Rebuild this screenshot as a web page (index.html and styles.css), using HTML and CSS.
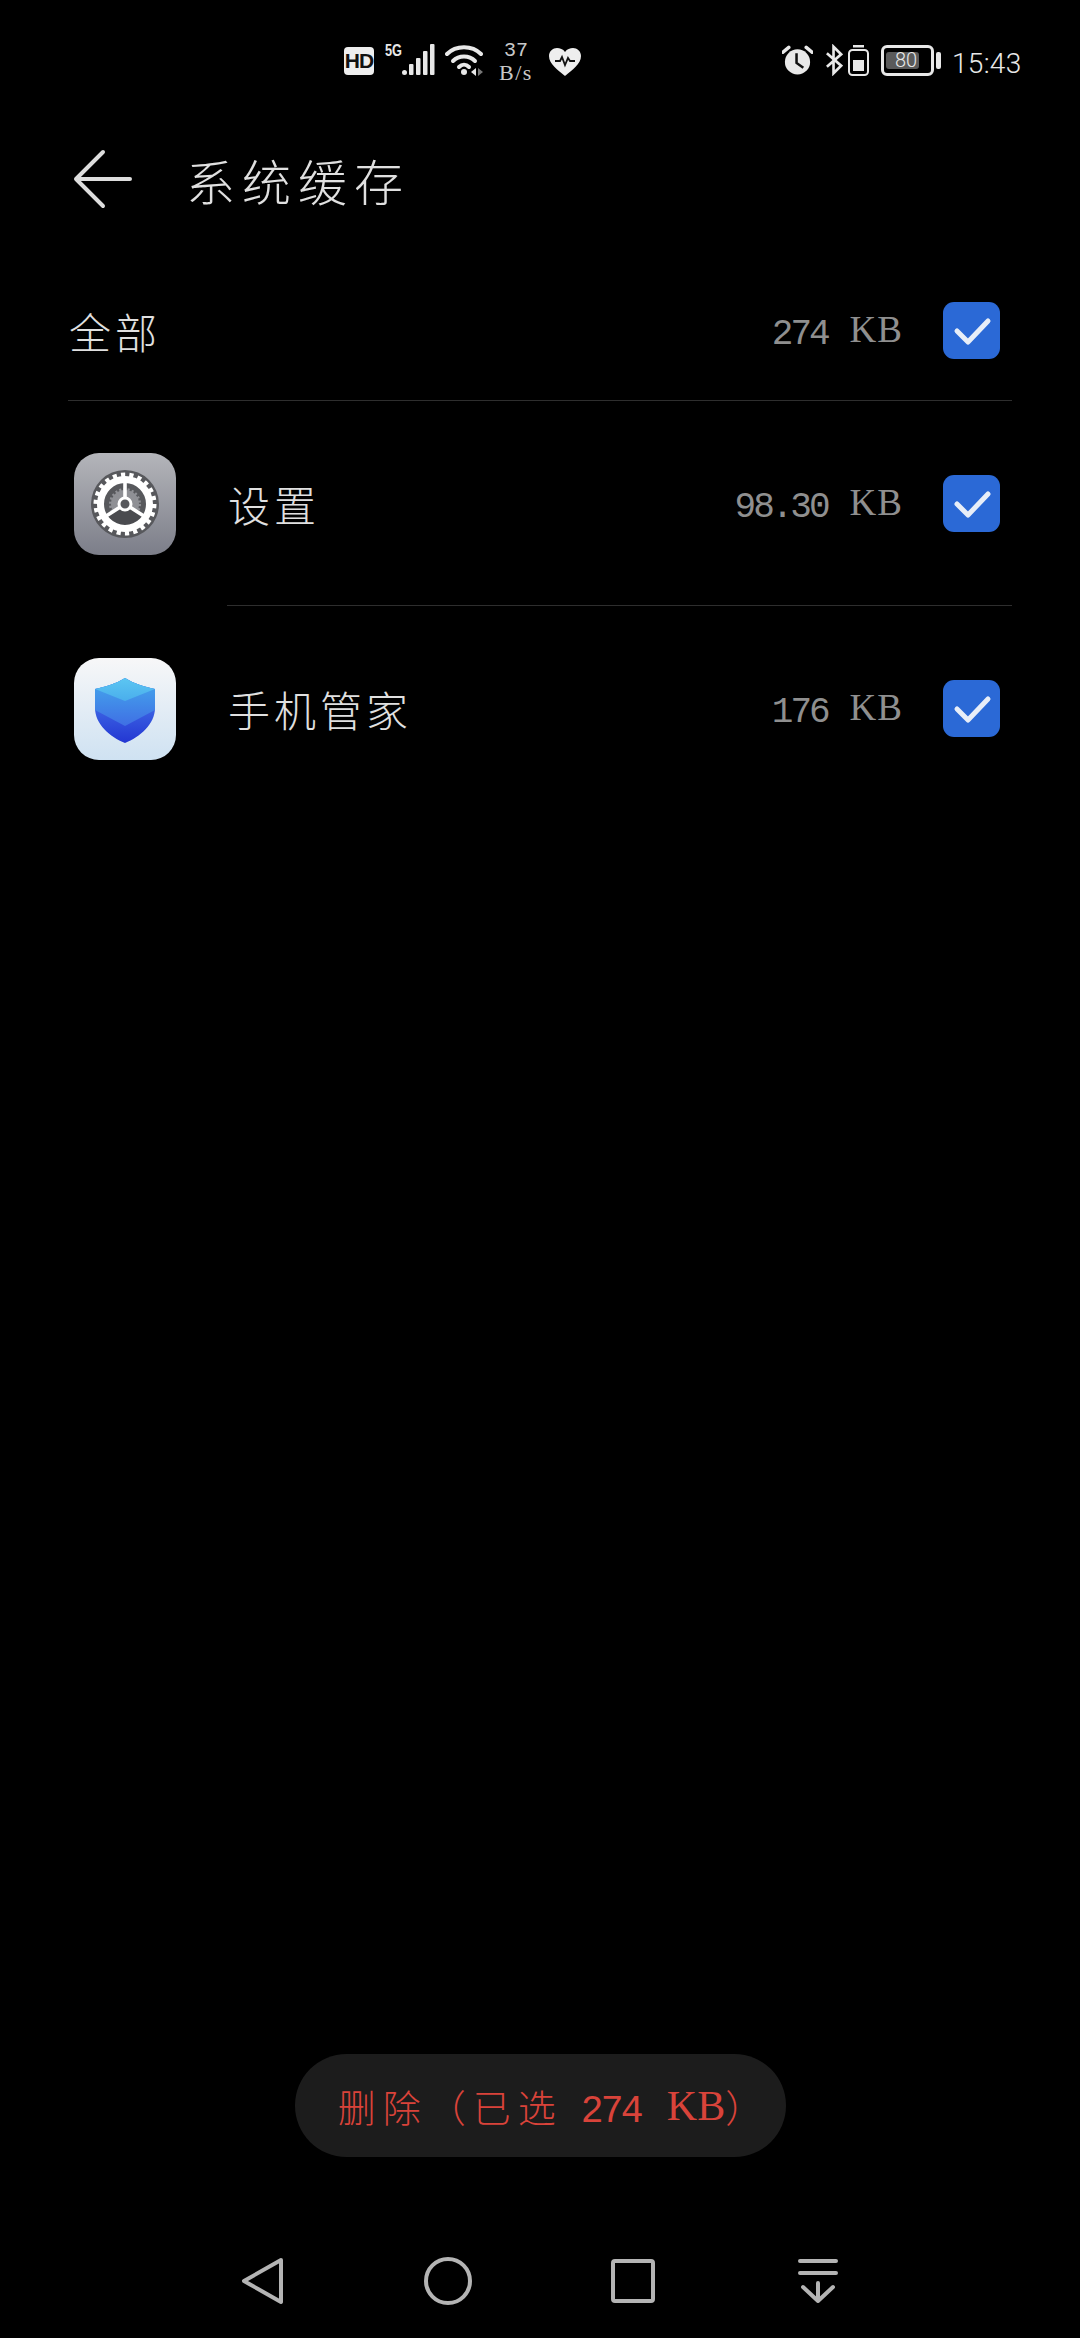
FILE: index.html
```html
<!DOCTYPE html>
<html lang="zh-CN">
<head>
    <meta charset="UTF-8">
    <title>系统缓存</title>
    <link rel="stylesheet" href="styles.css">
</head>
<body>
<div class="page">

    <!-- status bar -->
    <div class="status">
        <div class="hd">HD</div>
        <div class="five-g">5G</div>
        <svg class="signal" width="33" height="32" viewBox="17 0 33 32">
            <g fill="#e8e8e8">
                <rect x="17" y="26" width="5" height="5" rx="2.5"/>
                <rect x="24" y="20" width="4.5" height="11" rx="1"/>
                <rect x="31" y="14" width="4.5" height="17" rx="1"/>
                <rect x="38" y="7" width="4.5" height="24" rx="1"/>
                <rect x="45" y="0" width="4.5" height="31" rx="1"/>
            </g>
        </svg>
        <svg class="wifi" width="38" height="32" viewBox="0 0 38 32">
            <g fill="none" stroke="#e8e8e8" stroke-width="4" stroke-linecap="round">
                <path d="M2 10 C11 1 27 1 36 10"/>
                <path d="M8 17 C14 11 24 11 30 17"/>
                <path d="M14 23 C17 20 21 20 24 23"/>
            </g>
            <circle cx="19" cy="28" r="3" fill="#e8e8e8"/>
            <path d="M31 24 L26 28 L31 32 Z" fill="#e8e8e8"/>
            <path d="M33 24 L38 28 L33 32 Z" fill="#777"/>
        </svg>
        <div class="speed">
            <span>37</span>
            <span class="speed-unit">B/s</span>
        </div>
        <svg class="heart" width="32" height="28" viewBox="0 0 32 28">
            <path d="M16 28 C9 22 0 16 0 8 C0 3 4 0 8 0 C11 0 14 1 16 4 C18 1 21 0 24 0 C28 0 32 3 32 8 C32 16 23 22 16 28 Z" fill="#eee"/>
            <path d="M6 13 H11 L13 9 L16 17 L19 10 L21 13 H26" fill="none" stroke="#111" stroke-width="1.8"/>
        </svg>

        <div class="status-right">
            <svg class="alarm" width="31" height="32" viewBox="0 0 32 32">
                <circle cx="16" cy="18" r="13" fill="#e8e8e8"/>
                <path d="M15 9 V19 L22 24" fill="none" stroke="#111" stroke-width="2.6"/>
                <path d="M1 8 L7 3 M31 8 L25 3" stroke="#e8e8e8" stroke-width="3.6" stroke-linecap="round"/>
            </svg>
            <svg class="bluetooth" width="18" height="32" viewBox="0 0 19 32">
                <path d="M2 9 L17 22 L9 30 V2 L17 10 L2 23" fill="none" stroke="#e8e8e8" stroke-width="2.8"/>
            </svg>
            <svg class="phone-battery" width="21" height="32" viewBox="0 0 21 32">
                <rect x="5" y="1" width="11" height="2.5" fill="#e8e8e8"/>
                <rect x="1" y="6" width="19" height="25" rx="3.5" fill="none" stroke="#e8e8e8" stroke-width="2"/>
                <rect x="5" y="16" width="11" height="11" fill="#e8e8e8"/>
            </svg>
            <div class="battery">
                <div class="battery-body"><span class="battery-level">80</span></div>
                <div class="battery-nub"></div>
            </div>
            <div class="time">15:43</div>
        </div>
    </div>

    <!-- title -->
    <div class="header">
        <svg class="back" width="60" height="60" viewBox="0 0 60 60">
            <path d="M31 3 L4 30 L31 57 M4 30 H58" fill="none" stroke="#ddd" stroke-width="4" stroke-linecap="round" stroke-linejoin="round"/>
        </svg>
        <h1 class="title">系统缓存</h1>
    </div>

    <!-- select all -->
    <div class="row-all">
        <span class="name">全部</span>
        <span class="size"><span class="num">274</span><span class="unit">KB</span></span>
        <svg class="check" width="57" height="57" viewBox="0 0 57 57">
            <rect width="57" height="57" rx="11" fill="#2b69d6"/>
            <path d="M14 29 L25 40 L45 19" fill="none" stroke="#e8eef8" stroke-width="5" stroke-linecap="round" stroke-linejoin="round"/>
        </svg>
    </div>

    <!-- apps -->
    <div class="row">
        <svg class="app-icon" width="102" height="102" viewBox="0 0 102 102">
            <defs>
                <linearGradient id="gearBg" x1="0" y1="0" x2="0" y2="1">
                    <stop offset="0" stop-color="#b4b5ba"/>
                    <stop offset="1" stop-color="#7c7e89"/>
                </linearGradient>
            </defs>
            <rect width="102" height="102" rx="25" fill="url(#gearBg)"/>
            <circle cx="51" cy="51" r="34" fill="#57585c"/>
            <circle cx="51" cy="51" r="14" fill="#8f9095" stroke="#8f9095" stroke-width="4" stroke-dasharray="2 2"/>
            <path d="M51 51 L31 66 A25 25 0 0 0 71 66 Z" fill="#4a4b4f"/>
            <circle cx="51" cy="51" r="24.5" fill="none" stroke="#fff" stroke-width="7"/>
            <circle cx="51" cy="51" r="29" fill="none" stroke="#fff" stroke-width="5" stroke-dasharray="4.14 4.14"/>
            <path d="M51 51 V25 M51 51 L29 65 M51 51 L73 65" stroke="#fff" stroke-width="3.6"/>
            <circle cx="51" cy="51" r="6" fill="#57585c" stroke="#fff" stroke-width="3"/>
        </svg>
        <div class="row-main">
            <span class="name">设置</span>
            <span class="size"><span class="num">98.30</span><span class="unit">KB</span></span>
            <svg class="check" width="57" height="57" viewBox="0 0 57 57">
                <rect width="57" height="57" rx="11" fill="#2b69d6"/>
                <path d="M14 29 L25 40 L45 19" fill="none" stroke="#e8eef8" stroke-width="5" stroke-linecap="round" stroke-linejoin="round"/>
            </svg>
        </div>
    </div>

    <div class="row row-last">
        <svg class="app-icon" width="102" height="102" viewBox="0 0 102 102">
            <defs>
                <linearGradient id="shieldBg" x1="0" y1="0" x2="0" y2="1">
                    <stop offset="0" stop-color="#f7f7f8"/>
                    <stop offset="1" stop-color="#cfe2f2"/>
                </linearGradient>
                <linearGradient id="shieldTop" x1="0" y1="0" x2="0" y2="1">
                    <stop offset="0" stop-color="#5cc6f2"/>
                    <stop offset="1" stop-color="#4aaeec"/>
                </linearGradient>
                <linearGradient id="shieldMid" x1="0" y1="0" x2="0" y2="1">
                    <stop offset="0.3" stop-color="#4398ea"/>
                    <stop offset="1" stop-color="#3f6fe4"/>
                </linearGradient>
                <linearGradient id="shieldLow" x1="0" y1="0" x2="0" y2="1">
                    <stop offset="0.5" stop-color="#3a60e2"/>
                    <stop offset="1" stop-color="#2336d2"/>
                </linearGradient>
                <clipPath id="shieldClip">
                    <path d="M51 20 C60 26 72 29 81 31 V50 C81 66 66 79 51 85 C36 79 21 66 21 50 V31 C30 29 42 26 51 20 Z"/>
                </clipPath>
            </defs>
            <rect width="102" height="102" rx="25" fill="url(#shieldBg)"/>
            <g clip-path="url(#shieldClip)">
                <rect x="21" y="20" width="60" height="65" fill="url(#shieldLow)"/>
                <path d="M21 20 H81 V52 L51 68 L21 52 Z" fill="url(#shieldMid)"/>
                <path d="M21 20 H81 V31 L51 43 L21 31 Z" fill="url(#shieldTop)"/>
            </g>
        </svg>
        <div class="row-main">
            <span class="name">手机管家</span>
            <span class="size"><span class="num">176</span><span class="unit">KB</span></span>
            <svg class="check" width="57" height="57" viewBox="0 0 57 57">
                <rect width="57" height="57" rx="11" fill="#2b69d6"/>
                <path d="M14 29 L25 40 L45 19" fill="none" stroke="#e8eef8" stroke-width="5" stroke-linecap="round" stroke-linejoin="round"/>
            </svg>
        </div>
    </div>

    <!-- delete -->
    <div class="delete">
        <button class="delete-btn">删除（已选<span class="num">274</span><span class="unit">KB</span>）</button>
    </div>

    <!-- nav bar -->
    <div class="nav">
        <svg width="44" height="48" viewBox="0 0 44 48">
            <path d="M40 3 L3 24 L40 45 Z" fill="none" stroke="#b4b4b4" stroke-width="4" stroke-linejoin="round"/>
        </svg>
        <svg width="48" height="48" viewBox="0 0 48 48">
            <circle cx="24" cy="24" r="22" fill="none" stroke="#b4b4b4" stroke-width="4"/>
        </svg>
        <svg width="44" height="44" viewBox="0 0 44 44">
            <rect x="2" y="2" width="40" height="40" rx="2" fill="none" stroke="#b4b4b4" stroke-width="4"/>
        </svg>
        <svg width="40" height="44" viewBox="0 0 40 44">
            <path d="M2 2 H38 M2 14 H38 M20 24 V42 M5 28 L20 42 L35 28" fill="none" stroke="#b4b4b4" stroke-width="4" stroke-linecap="round" stroke-linejoin="round"/>
        </svg>
    </div>
</div>
</body>
</html>
```

FILE: styles.css
```css
html {
    background-color: black;
}
body {
    margin: 0;
    color: #e0e0e0;
    font-family: "Noto Sans CJK SC", sans-serif;
    font-weight: 300;
}
.page {
    width: 1080px;
    height: 2338px;
    display: flex;
    flex-direction: column;
    overflow: hidden;
}

/* status bar */
.status {
    height: 80px;
    padding: 40px 59px 0 344px;
    box-sizing: border-box;
    display: flex;
    align-items: flex-start;
    color: #e8e8e8;
}
.hd {
    width: 30px;
    height: 28px;
    margin-top: 7px;
    border-radius: 4px;
    background-color: #eee;
    color: #111;
    font: bold 21px/28px "Liberation Sans", sans-serif;
    text-align: center;
    letter-spacing: -1px;
}
.five-g {
    width: 17px;
    margin: 2px 0 0 11px;
    font: bold 17px/18px "Liberation Sans", sans-serif;
    transform: scaleX(0.75);
    transform-origin: left;
    white-space: nowrap;
}
.signal {
    margin-top: 4px;
}
.wifi {
    margin: 4px 0 0 10px;
}
.speed {
    width: 36px;
    margin: 0 0 0 15px;
    display: flex;
    flex-direction: column;
    align-items: center;
    color: #c8c8c8;
    font: 300 20px/22px "Liberation Mono", monospace;
}
.speed-unit {
    font-family: "Liberation Serif", serif;
    font-size: 22px;
    letter-spacing: 1.5px;
}
.heart {
    margin: 8px 0 0 15px;
}
.status-right {
    margin-left: auto;
    display: flex;
    align-items: flex-start;
}
.alarm {
    margin-top: 4px;
}
.bluetooth {
    margin: 4px 0 0 12px;
}
.phone-battery {
    margin: 4px 0 0 5px;
}
.battery {
    margin: 5px 0 0 12px;
    display: flex;
    align-items: center;
}
.battery-body {
    width: 53px;
    height: 31px;
    padding: 4px 2px;
    box-sizing: border-box;
    border: 3px solid #e8e8e8;
    border-radius: 6px;
}
.battery-level {
    display: block;
    width: 33px;
    height: 17px;
    padding-left: 9px;
    box-sizing: border-box;
    border-radius: 3px;
    background-color: #5a5a5a;
    font: 300 20px/17px Roboto, sans-serif;
}
.battery-nub {
    width: 5px;
    height: 17px;
    margin-left: 2px;
    border-radius: 2px;
    background-color: #e8e8e8;
}
.time {
    width: 69px;
    margin: 7px 0 0 11px;
    font: 300 28px/34px Roboto, sans-serif;
    letter-spacing: 0.3px;
    white-space: nowrap;
}

/* title */
.header {
    height: 118px;
    margin-top: 40px;
    padding-left: 72px;
    display: flex;
    align-items: center;
}
.title {
    margin: 0 0 0 54px;
    font-size: 49px;
    font-weight: 300;
    letter-spacing: 7px;
}

/* rows */
.row-all {
    height: 140px;
    margin: 22px 68px 0;
    padding-right: 12px;
    border-bottom: 1px solid #2e2e2e;
    display: flex;
    align-items: center;
}
.row-all .name {
    margin-left: 1px;
}
.row {
    height: 205px;
    padding: 0 68px 0 74px;
    display: flex;
    align-items: center;
}
.app-icon {
    flex: none;
}
.row-main {
    flex: 1;
    align-self: stretch;
    margin-left: 51px;
    padding-right: 12px;
    border-bottom: 1px solid #2e2e2e;
    display: flex;
    align-items: center;
}
.row-last .row-main {
    border-bottom: none;
}
.row-main .name {
    margin-left: 1px;
}
.name {
    font-size: 42px;
    letter-spacing: 4px;
}
.size {
    margin-left: auto;
    margin-top: 4px;
    color: #8f8f8f;
    display: flex;
    align-items: baseline;
}
.num {
    font-family: "Liberation Mono", monospace;
    font-size: 36px;
    font-weight: 300;
    letter-spacing: -3px;
}
.unit {
    margin-left: 22px;
    position: relative;
    top: -2px;
    font-family: "Liberation Serif", serif;
    font-size: 37px;
    letter-spacing: 1px;
}
.check {
    flex: none;
    margin-left: 40px;
}

/* delete button */
.delete {
    margin-top: auto;
    margin-bottom: 67px;
    display: flex;
    justify-content: center;
}
.delete-btn {
    width: 491px;
    height: 103px;
    padding: 0 0 0 28px;
    border: none;
    border-radius: 52px;
    background-color: #1c1c1c;
    color: #d9433a;
    font-family: "Noto Sans CJK SC", sans-serif;
    font-size: 38px;
    font-weight: 300;
    letter-spacing: 7px;
    white-space: nowrap;
}
.delete-btn .num {
    margin-left: 18px;
    font-size: 38px;
    letter-spacing: -2.8px;
}
.delete-btn .unit {
    top: -2px;
    margin-left: 26px;
    font-size: 42px;
    letter-spacing: 0;
}

/* nav bar */
.nav {
    height: 114px;
    display: grid;
    grid-template-columns: repeat(4, 185px);
    justify-content: center;
    justify-items: center;
    align-items: center;
}
```
